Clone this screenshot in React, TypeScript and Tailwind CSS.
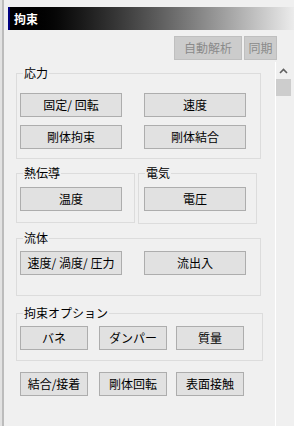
import React from 'react';

const font = { fontFamily: '"Noto Sans CJK JP", "Noto Sans", sans-serif' };

const Btn: React.FC<{ label: string; w: string; className?: string }> = ({ label, w, className = '' }) => (
  <button
    className={`${w} h-[24px] shrink-0 border border-[#adadad] bg-[#e1e1e1] text-[12px] leading-none text-black ${className}`}
  >
    {label}
  </button>
);

const Group: React.FC<{ label: string; className: string; children: React.ReactNode }> = ({ label, className, children }) => (
  <div className={`relative border border-[#dcdcdc] ${className}`}>
    <span className="absolute left-[6px] top-[-9px] bg-[#f0f0f0] px-[1px] text-[12px] leading-[16px] text-black">
      {label}
    </span>
    {children}
  </div>
);

export default function App() {
  return (
    <div className="flex h-[426px] w-[294px] overflow-hidden bg-[#f0f0f0]" style={font}>
      {/* left frame edge */}
      <div className="h-full w-[2px] bg-[#e2e2e2]" />
      <div className="h-full w-[2px] bg-[#bcbcbc]" />
      <div className="h-full w-[4px]" />

      <div className="flex flex-1 flex-col">
        {/* title bar */}
        <div className="mt-[7px] flex h-[23px] items-center border-l-2 border-[#000080] bg-gradient-to-r from-black from-[3%] to-[#ececec] pl-[4px]">
          <span className="text-[12px] font-bold leading-none text-white">拘束</span>
        </div>

        {/* toolbar */}
        <div className="mt-[6px] flex justify-end pr-[17px]">
          <button className="h-[24px] w-[68px] border border-[#bfbfbf] bg-[#cccccc] text-[12px] leading-none text-[#8a8a8a]">
            自動解析
          </button>
          <button className="ml-[2px] h-[24px] w-[33px] border border-[#bfbfbf] bg-[#cccccc] text-[12px] leading-none text-[#8a8a8a]">
            同期
          </button>
        </div>

        {/* body + scrollbar */}
        <div className="mt-[2px] flex flex-1">
          <div className="w-[267px] pl-[8px] pt-[11px]">
            <Group label="応力" className="h-[86px] w-[245px] pl-[3px] pt-[19px]">
              <div className="grid grid-cols-[102px_102px] gap-x-[22px] gap-y-[8px]">
                <Btn label="固定/ 回転" w="w-[102px]" />
                <Btn label="速度" w="w-[102px]" />
                <Btn label="剛体拘束" w="w-[102px]" />
                <Btn label="剛体結合" w="w-[102px]" />
              </div>
            </Group>

            <div className="mt-[14px] flex items-start">
              <Group label="熱伝導" className="h-[50px] w-[119px] pl-[3px] pt-[11px]">
                <Btn label="温度" w="w-[102px]" />
              </Group>
              <Group label="電気" className="ml-[3px] h-[51px] w-[119px] pl-[5px] pt-[11px]">
                <Btn label="電圧" w="w-[102px]" />
              </Group>
            </div>

            <Group label="流体" className="mt-[14px] h-[58px] w-[245px] pl-[3px] pt-[12px]">
              <div className="flex gap-x-[22px]">
                <Btn label="速度/ 渦度/ 圧力" w="w-[102px]" />
                <Btn label="流出入" w="w-[102px]" />
              </div>
            </Group>

            <Group label="拘束オプション" className="mt-[17px] h-[48px] w-[247px] pl-[3px] pt-[12px]">
              <div className="flex">
                <Btn label="バネ" w="w-[68px]" />
                <Btn label="ダンパー" w="w-[68px]" className="ml-[11px]" />
                <Btn label="質量" w="w-[68px]" className="ml-[9px]" />
              </div>
            </Group>

            <div className="mt-[11px] flex pl-[4px]">
              <Btn label="結合/接着" w="w-[68px]" />
              <Btn label="剛体回転" w="w-[68px]" className="ml-[11px]" />
              <Btn label="表面接触" w="w-[68px]" className="ml-[9px]" />
            </div>
          </div>

          {/* scrollbar */}
          <div className="w-[1px] bg-white" />
          <div className="flex w-[18px] flex-col">
            <div className="flex h-[17px] w-[15px] items-center justify-center">
              <svg width="9" height="6" viewBox="0 0 9 6">
                <path d="M1 5 L4.5 1.5 L8 5" fill="none" stroke="#606060" strokeWidth="1.6" />
              </svg>
            </div>
            <div className="h-[17px] w-[15px] bg-[#cdcdcd]" />
          </div>
        </div>
      </div>
    </div>
  );
}
